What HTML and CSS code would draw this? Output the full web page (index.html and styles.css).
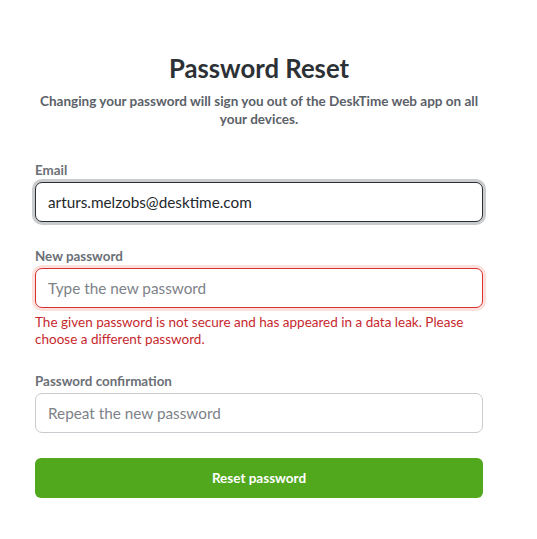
FILE: index.html
```html
<!DOCTYPE html>
<html>
<head>
<meta charset="utf-8">
<link rel="stylesheet" href="styles.css">
</head>
<body>
<main class="page">
  <h1 class="title">Password Reset</h1>
  <p class="subtitle">Changing your password will sign you out of the DeskTime web app on all your devices.</p>
  <form class="form">
    <div class="field">
      <label class="label">Email</label>
      <input class="input input-focus" type="text" value="arturs.melzobs@desktime.com">
    </div>
    <div class="field field-error">
      <label class="label">New password</label>
      <input class="input input-error" type="text" placeholder="Type the new password">
      <p class="error">The given password is not secure and has appeared in a data leak. Please choose a different password.</p>
    </div>
    <div class="field">
      <label class="label">Password confirmation</label>
      <input class="input" type="text" placeholder="Repeat the new password">
    </div>
    <button class="button" type="button">Reset password</button>
  </form>
</main>
</body>
</html>
```
FILE: styles.css
```css
* { box-sizing: border-box; }
body {
  margin: 0;
  background: #fff;
  font-family: "Lato", "Noto Sans", sans-serif;
}
.page {
  width: 448px;
  margin-left: 35px;
  padding-top: 52px;
}
.title {
  margin: 0;
  text-align: center;
  font-size: 25.7px;
  line-height: 32px;
  font-weight: 700;
  color: #2c3136;
}
.subtitle {
  margin: 8px 0 0;
  text-align: center;
  font-size: 13.5px;
  line-height: 18px;
  font-weight: 700;
  color: #5b6168;
}
.form {
  margin-top: 34px;
  display: flex;
  flex-direction: column;
}
.field {
  display: flex;
  flex-direction: column;
  margin-bottom: 26px;
}
.field-error { margin-bottom: 25px; }
.label {
  font-size: 13.4px;
  line-height: 16px;
  font-weight: 700;
  color: #6b7076;
  margin-bottom: 4px;
}
.input {
  height: 40px;
  width: 100%;
  border: 1px solid #c8cbcf;
  border-radius: 7px;
  padding: 0 12px;
  font-family: inherit;
  font-size: 15.3px;
  color: #24282c;
  outline: none;
}
.input::placeholder { color: #7d8288; }
.input-focus {
  border-color: #2b2f33;
  box-shadow: 0 0 0 3px #c9cbcd;
}
.input-error {
  border-color: #d9322e;
  box-shadow: 0 0 0 3px #fde0dc;
}
.error {
  margin: 6px 0 0;
  font-size: 13.5px;
  line-height: 17px;
  color: #c7282e;
}
.button {
  height: 40px;
  border: none;
  border-radius: 6px;
  background: #51a81d;
  color: #fff;
  font-family: inherit;
  font-size: 13.5px;
  font-weight: 700;
  margin-top: -1px;
}
```
